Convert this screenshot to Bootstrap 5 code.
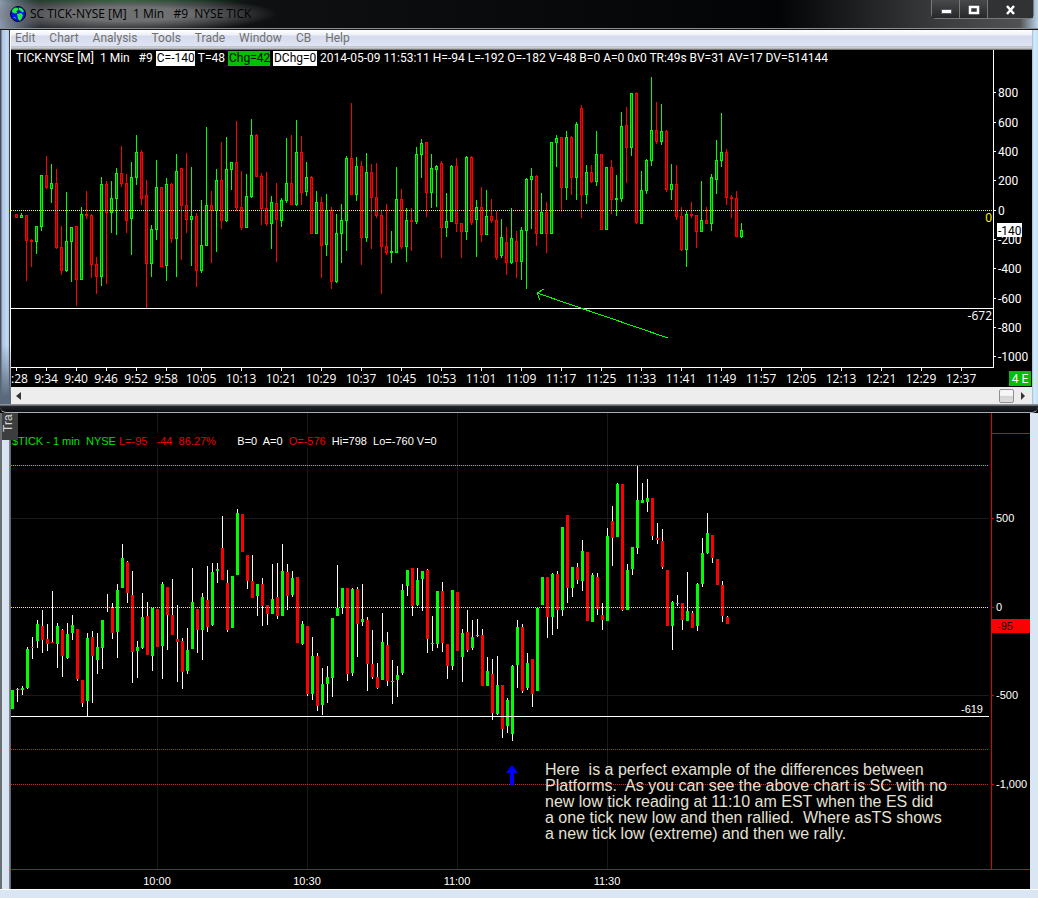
<!DOCTYPE html>
<html lang="en">
<head>
<meta charset="utf-8">
<meta name="viewport" content="width=device-width, initial-scale=1">
<title>SC TICK-NYSE [M] 1 Min</title>
<link rel="stylesheet" href="https://cdn.jsdelivr.net/npm/bootstrap@5.3.0/dist/css/bootstrap.min.css">
<style>
  body { background: #000; font-family: "Open Sans", "Noto Sans", sans-serif; font-size: 12px; line-height: 16px; color: #fff; }
  svg { shape-rendering: crispEdges; }
  svg text { fill: #fff; }
  .glyph { shape-rendering: geometricPrecision; }
  .fill-col { min-width: 0; }
  .frame-left { width: 11px; }
  .frame-right { width: 6px; background: linear-gradient(90deg, #9fb9d3, #d3ecff 2px, #c3ddf3); }

  .sc-window .frame-left { background: linear-gradient(180deg, transparent 84%, #5a6a7c 98%), linear-gradient(90deg, #4a4f58 1px, #a9c2e2 2px, #c3daf4 7px, #b4cbe6 9px, #3c4046 9px, #3c4046 10px, #fff 10px); }
  .title-bar { height: 30px; padding-left: 10px; color: #000; border-bottom: 1px solid #14171a; box-shadow: inset 0 -1px #8a8f92;
    background: radial-gradient(ellipse 150px 18px at 128px 14px, #6f7072 40%, transparent 100%), radial-gradient(ellipse 130px 7px at 125px 0, #0c561b, transparent), linear-gradient(90deg, #8a99ad 0, #26292d 40px, #0e1012 260px, #030405 780px, #3b3c3e 940px, #505254 1020px, #bcd5ec 100%); }
  .title-bar h1 { font-size: 12px; line-height: 20px; font-weight: 400; white-space: pre; }
  .caption-buttons { width: 103px; height: 19px; border: 1px solid #77797b; border-top: 0; border-radius: 0 0 5px 5px; background: #2f3133; }
  .caption-buttons button { border: 0; border-right: 1px solid #77797b; background: linear-gradient(#48494b, #26282a); padding: 0; width: 28px; line-height: 12px; }
  .caption-buttons button:last-child { width: 45px; border-right: 0; background: #303234; }
  .menu-strip { height: 20px; line-height: 17px; padding-left: 4px; font-family: Roboto, sans-serif; background: linear-gradient(#fff 0, #eef0f8 5px, #d5dbec 6px, #dfe4f4 16px, #a5a8ad 17px, #f2f2f2 18px, #77797b 19px); }
  .menu-strip a { color: #707070; text-decoration: none; margin-right: 14px; }
  .quote-line { height: 16px; padding-left: 5px; white-space: pre; font-family: Roboto, sans-serif; gap: 3px; }
  .tag { height: 15px; line-height: 15px; color: #000; background: #fff; overflow: hidden; padding-left: 1px; }
  .tag-green { background: #00c000; }
  .tag-c { width: 39px; } .tag-chg { width: 42px; } .tag-dchg { width: 44px; }
  .axis-col { width: 39px; }
  #scAxis { font-family: Roboto, sans-serif; }
  .scroll-strip { height: 17px; background: #ededed; }
  .scroll-strip button { border: 0; background: none; padding: 0; width: 16px; line-height: 0; }
  .scroll-strip button:last-child { width: 18px; }
  .scroll-strip input { appearance: none; background: none; height: 17px; margin: 0; min-width: 0; }
  .scroll-strip input::-webkit-slider-thumb { appearance: none; width: 15px; height: 14px; border: 1px solid #8f8f8f; border-radius: 2px; background: linear-gradient(#f6f6f6 45%, #d2d3d5 50%, #dedede); }
  .frame-bottom { height: 9px; border-bottom: 1px solid #a9acb0; border-radius: 0 0 6px 6px; background: linear-gradient(#70757a 0, #a9acb0 1px, #22262b 2px, #0b0e12); }

  .ts-window { font-family: "Liberation Sans", Arial, sans-serif; font-size: 11px; }
  .ts-window .frame-left { background: linear-gradient(90deg, #6b6d73 2px, #dbe6f4 2px, #d6e2f1 9px, #8a8f96 9px, #55585c 11px); }
  .ts-window .frame-right { width: 8px; background: #dbe6f4; }
  .ts-foot { height: 9px; background: #dbe6f4; border-top: 1px solid #fff; }
  .side-tab { left: 2px; top: 0; width: 16px; height: 27px; background: #3c3d3f; color: #d8d8d8; writing-mode: vertical-rl; transform: rotate(180deg); font-size: 12px; line-height: 12px; overflow: hidden; padding-top: 8px; }
  .ts-quote { left: 0; top: 20px; height: 15px; line-height: 16px; background: #000; white-space: pre; padding-left: 1px; }
  .up { color: #00e000; } .down { color: #f00000; }
  .note-text { left: 534px; top: 349px; font-size: 16px; line-height: 16px; color: #e4e1d6; white-space: pre; margin: 0; }
</style>
</head>
<body>
<section class="sc-window d-flex flex-column position-relative">
  <header class="title-bar d-flex align-items-start">
    <svg class="glyph mt-1 flex-shrink-0" width="16" height="18" viewBox="0 0 16 18" aria-hidden="true">
      <circle cx="8" cy="10" r="7.5" fill="#0713e8" stroke="#02031c"/>
      <path d="M2 6l3-2.500 3 .5.5 2-2 1 .5 2-2 .5-2.500-1zM9 3.500l3 1 2 3-1.500 1-2-1.500-1.500-1zM7 10l4-1 2 2-1 3-2 3-2-2z" fill="#22ee3a"/>
      <path d="M3 13l2 0 1 2z" fill="#22ee3a"/>
    </svg>
    <h1 class="m-0 ms-1 mt-1 flex-grow-1">SC TICK-NYSE [M]  1 Min   #9  NYSE TICK</h1>
    <div class="caption-buttons d-flex me-1 flex-shrink-0">
      <button aria-label="Minimize"><svg width="12" height="8"><rect x="1" y="3" width="10" height="4" fill="#fff" stroke="#555b66"/></svg></button>
      <button aria-label="Maximize"><svg width="12" height="10" class="glyph"><rect x="2" y="2" width="8" height="6" fill="none" stroke="#fff" stroke-width="2.500"/></svg></button>
      <button aria-label="Close"><svg width="12" height="10" class="glyph"><path d="M2 1l7 8M9 1l-7 8" stroke="#fff" stroke-width="2.500"/></svg></button>
    </div>
  </header>
  <div class="d-flex">
    <div class="frame-left flex-shrink-0"></div>
    <div class="flex-grow-1 fill-col">
      <nav class="menu-strip d-flex" aria-label="Main menu">
        <a href="#">Edit</a><a href="#">Chart</a><a href="#">Analysis</a><a href="#">Tools</a><a href="#">Trade</a><a href="#">Window</a><a href="#">CB</a><a href="#">Help</a>
      </nav>
      <div class="d-flex">
        <div class="flex-grow-1 fill-col">
          <div class="quote-line d-flex align-items-center"><span>TICK-NYSE [M]  1 Min   #9</span><span class="tag tag-c">C=-140</span><span>T=48</span><span class="tag tag-green tag-chg">Chg=42</span><span class="tag tag-dchg">DChg=0</span><span>2014-05-09 11:53:11 H=-94 L=-192 O=-182 V=48 B=0 A=0 0x0 TR:49s BV=31 AV=17 DV=514144</span></div>
          <svg class="d-block w-100" id="scPlot" height="321" role="img" aria-label="NYSE TICK one minute bars"></svg>
        </div>
        <svg class="axis-col flex-shrink-0" id="scAxis" height="337" role="img" aria-label="Price scale"></svg>
      </div>
      <div class="scroll-strip d-flex align-items-center">
        <button aria-label="Scroll left"><svg class="glyph" width="6" height="8"><path d="M5 0v8L0 4z" fill="#333"/></svg></button>
        <input class="flex-grow-1" type="range" min="0" max="100" value="100" aria-label="Chart position">
        <button aria-label="Scroll right"><svg class="glyph" width="6" height="8"><path d="M1 0v8l4-4z" fill="#333"/></svg></button>
      </div>
    </div>
    <div class="frame-right flex-shrink-0"></div>
  </div>
  <div class="frame-bottom"></div>
</section>

<section class="ts-window position-relative">
  <div class="d-flex">
    <div class="frame-left flex-shrink-0"></div>
    <div class="flex-grow-1 fill-col position-relative d-flex">
      <svg class="flex-grow-1" id="tsPlot" height="476" width="10" role="img" aria-label="$TICK one minute candles"></svg>
      <svg class="axis-col flex-shrink-0" id="tsAxis" height="476" role="img" aria-label="Price scale"></svg>
      <div class="ts-quote position-absolute"><span class="up">$TICK - 1 min  NYSE</span><span class="down"> L=-95   -44  86.27%</span>       B=0  A=0  <span class="down">O=-576</span>  Hi=798  Lo=-760 V=0</div>
      <p class="note-text position-absolute">Here  is a perfect example of the differences between
Platforms.  As you can see the above chart is SC with no
new low tick reading at 11:10 am EST when the ES did
a one tick new low and then rallied.  Where asTS shows
a new tick low (extreme) and then we rally.</p>
    </div>
    <div class="frame-right flex-shrink-0"></div>
  </div>
  <div class="side-tab position-absolute">Tra</div>
  <div class="ts-foot"></div>
</section>

<script src="https://cdn.jsdelivr.net/npm/bootstrap@5.3.0/dist/js/bootstrap.bundle.min.js"></script>
<script>
/* Each bar: direction (g/r), then high, body top, body bottom, low on the screen scale. */
const scBars = `r 214 214 218 218|g 213 215 218 218|r 215 215 241 281|r 239 240 242 267|g 226 226 242 254|g 175 175 227 231|r 156 175 188 189|g 164 183 189 203|r 169 183 248 249|r 226 247 271 275|g 192 241 271 272|g 227 227 242 282|r 226 226 280 306|g 207 214 280 280|r 191 214 216 219|r 214 215 265 278|r 257 264 277 294|g 177 184 277 286|r 181 184 213 284|g 181 198 213 233|g 168 173 199 235|r 146 173 184 187|r 174 183 221 233|g 162 177 219 255|g 135 152 178 185|r 150 152 199 205|r 180 195 264 308|g 225 229 264 277|g 160 187 230 240|r 187 187 267 267|g 178 184 266 281|r 183 184 239 243|g 154 171 239 277|r 168 168 206 260|r 153 205 220 233|g 167 216 220 266|r 213 216 271 287|g 200 245 271 273|g 127 205 246 246|r 191 205 211 263|g 169 180 211 252|r 142 180 221 229|g 137 169 221 222|g 162 162 170 190|r 121 162 208 211|r 171 207 228 230|g 174 196 228 228|g 119 135 197 198|r 134 135 177 177|r 173 176 209 225|r 172 208 224 226|g 196 202 224 249|r 183 203 220 262|g 198 200 221 227|g 138 183 201 203|r 135 183 205 205|g 120 152 205 206|r 136 152 193 205|g 162 177 192 196|r 176 177 234 234|g 191 202 234 234|r 197 202 246 278|g 194 210 245 256|r 207 210 282 289|g 214 233 282 283|g 204 220 234 263|g 156 158 221 251|r 103 158 195 195|g 157 166 195 201|r 161 166 238 265|g 153 172 238 242|r 164 172 198 249|r 163 197 216 218|r 210 215 247 294|r 204 246 253 255|g 231 251 253 263|g 167 199 253 253|r 189 199 247 249|g 208 220 247 262|r 208 220 222 251|g 147 154 222 224|g 139 143 155 178|r 142 142 193 217|g 154 168 193 208|g 165 166 170 207|r 161 163 228 258|g 193 221 228 237|g 165 166 222 222|r 158 166 224 232|r 223 223 232 258|g 156 157 232 240|r 156 157 223 225|g 200 207 220 257|r 187 207 235 242|g 190 216 235 235|r 199 216 221 223|r 211 220 258 260|g 219 237 256 258|r 227 242 263 275|g 208 238 263 264|r 231 241 262 278|g 227 230 262 280|g 178 179 231 289|g 168 176 180 229|r 175 176 234 246|g 193 212 234 234|r 202 212 234 253|g 142 142 234 234|g 135 138 143 167|r 137 137 188 212|g 131 137 188 200|r 136 137 178 195|g 122 124 178 200|r 105 108 195 218|g 165 172 195 204|r 165 172 182 183|g 131 154 182 186|r 154 154 230 230|g 167 167 230 230|r 160 167 200 214|g 175 198 200 216|g 112 126 199 202|r 107 125 148 183|g 93 93 148 156|r 92 93 223 224|g 171 190 224 224|g 159 160 191 194|g 77 130 161 166|r 102 130 142 144|g 104 131 142 145|r 130 131 190 192|g 164 184 190 200|r 165 184 217 220|r 207 216 250 251|g 211 214 250 267|r 202 214 216 218|r 215 215 232 248|g 181 220 232 232|r 207 220 224 224|g 174 177 224 231|g 140 160 180 194|g 113 152 161 167|r 149 152 198 205|r 195 197 199 218|r 191 198 237 237|g 223 230 237 238`;
const tsBars = `g 690 690 709 709|g 688 689 690 702|g 686 688 690 695|g 647 649 688 689|r 637 647 648 659|g 620 624 641 648|r 610 626 640 653|r 624 639 644 651|r 591 642 643 643|g 623 626 644 668|r 629 630 656 677|g 623 634 658 659|g 615 625 633 640|r 629 629 679 681|r 680 680 703 707|g 633 638 701 716|r 631 637 656 703|g 633 647 660 674|g 620 620 648 669|r 594 607 608 612|r 603 608 633 639|g 584 590 632 658|g 544 558 588 588|r 561 562 593 603|r 571 595 652 683|g 641 647 651 678|g 593 617 648 649|r 602 616 655 655|g 608 608 656 671|r 609 609 647 647|g 582 584 646 679|r 587 587 615 650|r 579 615 635 635|r 605 639 642 682|r 638 641 672 689|g 628 650 671 674|g 568 602 649 649|r 609 609 630 653|g 593 597 630 660|r 566 600 627 632|g 563 572 625 626|g 563 569 571 583|r 516 548 580 580|r 570 583 630 632|g 576 576 628 628|g 509 513 575 575|r 514 514 552 552|r 555 555 581 589|r 555 581 598 598|g 584 584 596 616|r 578 584 606 626|r 605 605 614 625|g 564 599 614 614|r 563 597 616 619|g 544 571 616 616|r 564 572 596 610|g 571 578 595 597|r 577 577 643 643|g 621 624 644 645|r 626 626 694 696|g 637 656 694 700|r 653 656 706 711|g 668 684 705 715|g 666 677 684 703|g 618 618 678 697|g 565 608 616 616|g 588 588 608 614|r 588 588 674 681|g 588 589 673 676|r 587 589 624 657|g 584 619 622 626|r 617 620 664 691|r 630 664 677 679|r 663 677 688 689|g 613 642 680 680|r 632 645 681 686|g 660 681 682 704|g 666 675 680 697|g 584 590 673 675|g 570 570 586 596|r 568 568 606 616|g 568 580 605 606|g 571 571 579 611|r 569 570 639 653|g 616 643 644 651|g 591 591 644 648|r 582 591 643 652|r 644 644 666 679|g 590 590 666 670|r 592 592 651 651|g 629 633 657 682|r 610 632 650 652|g 620 637 648 650|g 619 635 636 637|r 629 635 686 686|g 657 671 686 686|r 659 674 713 720|g 656 685 714 715|r 685 685 729 738|g 698 700 726 733|g 665 666 734 741|g 620 627 665 688|r 624 627 691 693|g 653 663 688 690|r 659 659 694 707|g 608 608 691 691|g 577 577 605 605|r 577 577 617 638|g 573 574 617 635|r 571 574 610 629|g 527 527 610 616|r 515 515 588 603|g 567 567 588 597|r 563 567 580 584|g 540 551 581 591|r 552 552 621 621|g 573 575 622 622|r 573 577 609 615|r 603 615 620 630|g 528 536 621 621|r 506 521 538 566|g 483 484 537 537|r 484 484 610 611|g 564 570 610 610|g 547 547 569 575|g 466 500 548 554|g 483 500 503 503|g 479 498 502 512|r 498 498 536 540|r 523 538 540 544|r 529 541 567 569|r 570 570 626 626|g 601 602 626 650|g 595 603 604 606|r 603 603 620 630|g 572 611 621 621|r 611 613 628 628|g 583 584 626 631|g 538 553 584 587|g 513 533 553 554|r 535 535 558 563|r 559 559 585 585|r 581 585 616 622|r 616 617 624 624`;
const rect = (x, y, w, h, fill) => `<rect x="${x}" y="${y}" width="${w}" height="${h}" fill="${fill}"/>`;
const label = (x, y, s, anchor = 'start', fill = '#fff') => `<text x="${x}" y="${y}" text-anchor="${anchor}" style="fill:${fill}">${s}</text>`;
/* labels measured back from the plot's right edge */
const fromRight = inner => `<svg x="100%" overflow="visible">${inner}</svg>`;
/* alternating lit and unlit pixels across the full plot width */
const dots = (id, y, color) => `<pattern id="${id}" width="2" height="1" patternUnits="userSpaceOnUse"><rect width="1" height="1" fill="${color}"/></pattern><rect x="0" y="${y}" width="100%" height="1" fill="url(#${id})"/>`;
const parse = s => s.split('|').map(r => { const [d, ...v] = r.split(' '); return [d, ...v.map(Number)]; });

function drawSc() {
  const top = 66;
  let s = '';
  parse(scBars).forEach(([d, hi, a, b, lo], i) => {
    const x = 5 + i * 5, c = d === 'g' ? '#00ff00' : '#ff0000';
    s += rect(x, hi - top, 1, lo - hi, c) + rect(x - 1, a - top, 3, b - a, c);
    if (b - a > 2) s += rect(x, a - top + 1, 1, b - a - 2, d === 'g' ? '#007800' : '#8b0000');
  });
  s += dots('scZero', 144, '#ffff00');
  s += rect(0, 242, '100%', 1, '#fff') + rect(0, 301, '100%', 1, '#fff');
  s += `<path d="M657 272L526 227M533 223L526 227L529 234" fill="none" stroke="#00ff00"/>`;
  s += fromRight(label(-1, 156, '0', 'end', '#ffff00') + label(-1, 254, '-672', 'end'));
  const times = ['9:28', '9:34', '9:40', '9:46', '9:52', '9:58', '10:05', '10:13', '10:21', '10:29', '10:37', '10:45', '10:53', '11:01', '11:09', '11:17', '11:25', '11:33', '11:41', '11:49', '11:57', '12:05', '12:13', '12:21', '12:29', '12:37'];
  times.forEach((t, i) => { const x = i < 6 ? 5 + i * 30 : 190 + (i - 6) * 40; s += rect(x, 302, 1, 3, '#fff') + label(x, 317, t, 'middle'); });
  scPlot.innerHTML = s;
  const axisTop = 50;
  let a = rect(0, 0, 1, 318, '#fff');
  [[800, 92], [600, 122], [400, 151], [200, 180], [0, 210], [-200, 239], [-400, 268], [-600, 298], [-800, 327], [-1000, 356]].forEach(([v, y]) => { a += rect(1, y - axisTop, 2, 1, '#fff') + label(5, y - axisTop + 5, v); });
  a += rect(4, 173, 25, 14, '#fff') + label(5, 185, '-140', 'start', '#000');
  a += rect(16, 321, 22, 15, '#00c000') + label(27, 333, '4 E', 'middle');
  scAxis.innerHTML = a;
}
function drawTs() {
  const top = 413;
  let s = '';
  [157, 307, 457, 607].forEach((x, i) => { s += rect(x - 11, 0, 1, 456, '#1a1a1a') + label(x - 11, 472, ['10:00', '10:30', '11:00', '11:30'][i], 'middle'); });
  [518, 695].forEach(y => { s += rect(0, y - top, '100%', 1, '#1a1a1a'); });
  parse(tsBars).forEach(([d, hi, a, b, lo], i) => {
    const x = 1 + i * 5;
    s += rect(x, hi - top, 1, lo - hi, '#fff8f0') + rect(x - 1, a - top, 3, b - a, d === 'g' ? '#00ff00' : '#ff0000');
  });
  s += dots('tsHigh', 465 - top, '#00ff00') + dots('tsZero', 607 - top, '#ffff00') + dots('tsLow', 749 - top, '#e02020') + dots('tsGrid', 784 - top, '#e02020');
  s += rect(0, 716 - top, '100%', 1, '#fff');
  s += fromRight(rect(-2, 50, 2, 400, '#000') + label(-8, 300, '-619', 'end'));
  s += rect(0, 456, '100%', 1, '#e00000');
  s += `<path class="glyph" d="M501 352l6 8h-4v12h-4v-12h-4z" fill="#0000ff"/>`;
  tsPlot.innerHTML = s;
  let a = rect(0, 0, 1, 457, '#e00000') + rect(0, 20, '100%', 1, '#e00000') + rect(0, 456, '100%', 1, '#e00000');
  [['500', 518], ['0', 607], ['-500', 695], ['-1,000', 784]].forEach(([v, y]) => { a += rect(1, y - top, 2, 1, '#e00000') + label(5, y - top + 4, v); });
  a += rect(0, 206, '100%', 14, '#ff0000') + label(6, 217, '-95', 'start', '#000');
  tsAxis.innerHTML = a;
}
drawSc();
drawTs();
</script>
</body>
</html>
